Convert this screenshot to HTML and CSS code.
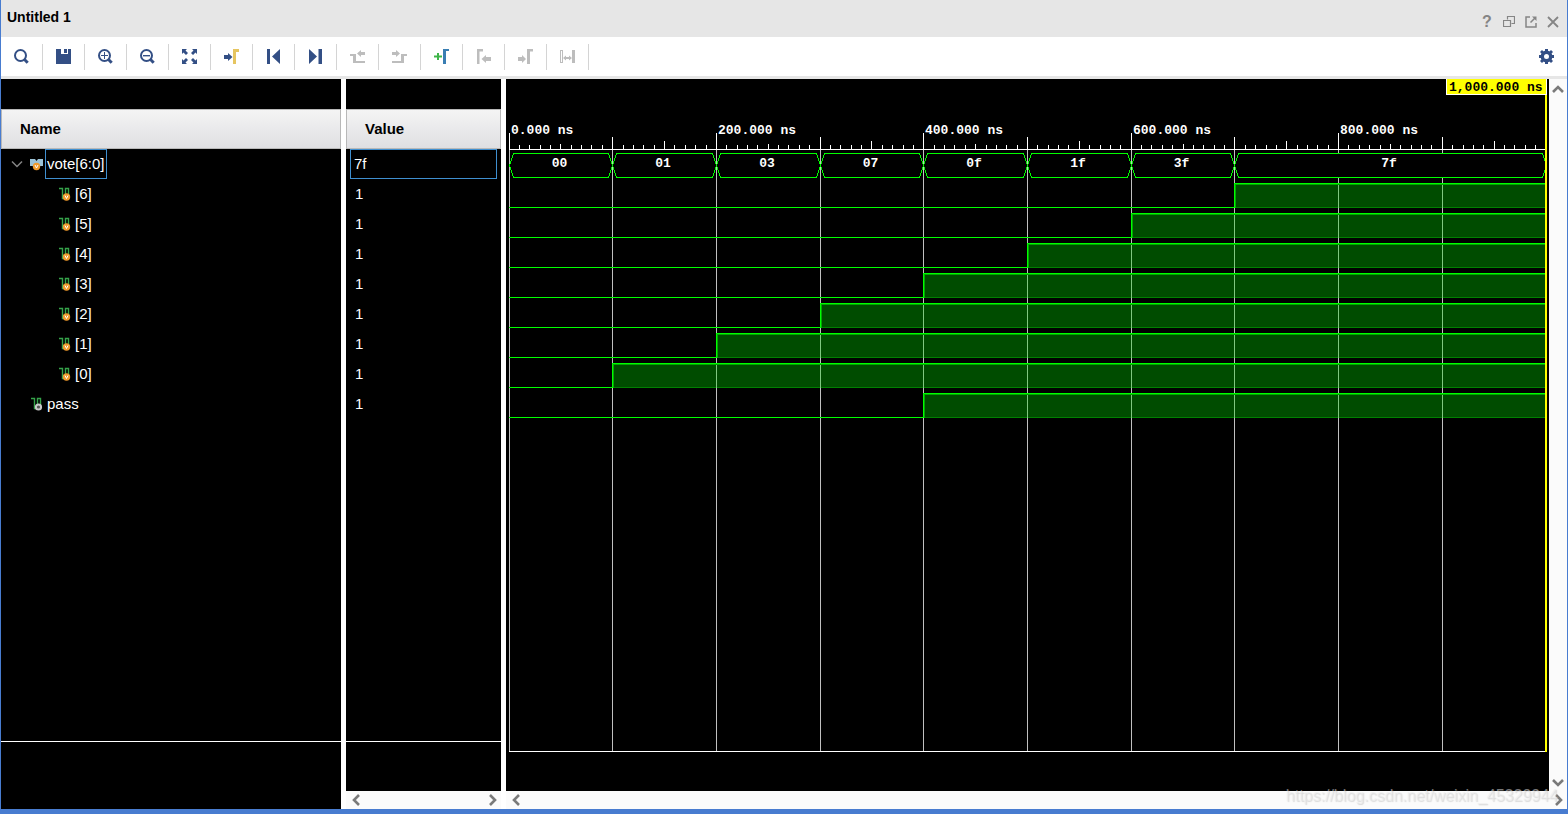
FILE: index.html
```html
<!DOCTYPE html>
<html lang="en">
<head>
<meta charset="utf-8">
<title>Untitled 1</title>
<link rel="stylesheet" href="styles.css">
</head>
<body>
<div class="window">
  <header class="titlebar">
    <h1 class="title">Untitled 1</h1>
    <div class="window-actions">
      <button class="window-button help" aria-label="Help">?</button>
      <button class="window-button" aria-label="Restore"><svg width="12" height="12" viewBox="0 0 12 12" fill="none" stroke="currentColor" stroke-width="1.200"><path d="M4.500 3.500v-3h7v7h-3M.5 4.500h7v6h-7z"/></svg></button>
      <button class="window-button" aria-label="Float"><svg width="12" height="12" viewBox="0 0 12 12" fill="none" stroke="currentColor" stroke-width="1.500"><path d="M5 1H1v10h10V7M5.500 6.500L10 2"/><path d="M7 .5h4.500V5z" fill="currentColor" stroke="none"/></svg></button>
      <button class="window-button" aria-label="Close"><svg width="12" height="12" viewBox="0 0 12 12" fill="none" stroke="currentColor" stroke-width="1.800"><path d="M1 1l10 10M11 1L1 11"/></svg></button>
    </div>
  </header>

  <nav class="toolbar" aria-label="Waveform tools">
    <button class="tool" aria-label="Search"><svg class="icon" viewBox="0 0 15 15"><circle cx="6.500" cy="6.500" r="5.500" class="line"/><path d="M10.500 10.500l3.200 3.200" class="thick"/></svg></button>
    <button class="tool" aria-label="Save"><svg class="icon" viewBox="0 0 15 15"><path d="M0 0h5v5h7V0h3v15H0zM8 0h3v4H8z"/></svg></button>
    <button class="tool" aria-label="Zoom in"><svg class="icon" viewBox="0 0 15 15"><circle cx="6.500" cy="6.500" r="5.500" class="line"/><path d="M10.500 10.500l3.200 3.200" class="thick"/><path d="M3 6h7v1H3zM6 3h1v7H6z"/></svg></button>
    <button class="tool" aria-label="Zoom out"><svg class="icon" viewBox="0 0 15 15"><circle cx="6.500" cy="6.500" r="5.500" class="line"/><path d="M10.500 10.500l3.200 3.200" class="thick"/><path d="M3 6h7v1.400H3z"/></svg></button>
    <button class="tool" aria-label="Zoom fit"><svg class="icon" viewBox="0 0 15 15"><path d="M0 0h5L3.500 1.500 6 4 4 6 1.500 3.500 0 5zM15 0v5l-1.500-1.500L11 6 9 4l2.500-2.500L10 0zM0 15v-5l1.500 1.500L4 9l2 2-2.500 2.500L5 15zM15 15h-5l1.500-1.500L9 11l2-2 2.500 2.500L15 10z"/></svg></button>
    <button class="tool" aria-label="Go to cursor"><svg class="icon" viewBox="0 0 15 15"><path d="M0 6h4V4l4.500 4L4 12v-2H0z"/><path class="yellow" d="M9 0h6v3h-3v12H9z"/></svg></button>
    <button class="tool" aria-label="Go to start"><svg class="icon" viewBox="0 0 15 15"><path d="M1 0h3v15H1zM14 0v15L6 7.500z"/></svg></button>
    <button class="tool" aria-label="Go to end"><svg class="icon" viewBox="0 0 15 15"><path d="M1 0v15l8-7.500zM10.500 0h3.500v15h-3.500z"/></svg></button>
    <button class="tool" aria-label="Previous transition" disabled><svg class="icon" viewBox="0 0 15 15"><path d="M0 5h6v7h9v2H3V7H0zM7 4.500L11 1v2h4v3h-4v2z"/></svg></button>
    <button class="tool" aria-label="Next transition" disabled><svg class="icon" viewBox="0 0 15 15"><path d="M15 5H9v7H0v2h12V7h3zM8 4.500L4 1v2H0v3h4v2z"/></svg></button>
    <button class="tool" aria-label="Add marker"><svg class="icon" viewBox="0 0 15 15"><path class="green" d="M3 4h2v2.500h3v2H5V11H3V8.500H0v-2h3z"/><path class="blue" d="M9 0h6v2h-3v13H9z"/></svg></button>
    <button class="tool" aria-label="Previous marker" disabled><svg class="icon" viewBox="0 0 15 15"><path d="M1 0h6v2.500H3.500V15H1zM5.500 10L10 6v2h5v4h-5v2z"/></svg></button>
    <button class="tool" aria-label="Next marker" disabled><svg class="icon" viewBox="0 0 15 15"><path d="M9 0h6v2.500h-3V15H9zM8 10L4 6v2H0v4h4v2z"/></svg></button>
    <button class="tool" aria-label="Swap cursors" disabled><svg class="icon" viewBox="0 0 15 15"><path fill-rule="evenodd" d="M0 1h3v13H0zM1 2v11h1V2zM12 1h3v13h-3zM3 9l3-2.500V8h3V6.500L12 9l-3 2.500V10H6v1.500z"/></svg></button>
    <button class="settings" aria-label="Settings"><svg class="icon" viewBox="0 0 15 15"><circle cx="7.500" cy="7.500" r="4.200" fill="none" stroke="currentColor" stroke-width="3.400"/><path d="M6 0h3v3H6zM6 12h3v3H6zM0 6h3v3H0zM12 6h3v3h-3zM1 3l2-2 2 2-2 2zM10 3l2-2 2 2-2 2zM1 12l2-2 2 2-2 2zM10 12l2-2 2 2-2 2z"/></svg></button>
  </nav>

  <main class="panels">
    <section class="panel names">
      <h2 class="heading">Name</h2>
      <ul class="rows" id="names"></ul>
      <div class="foot foot-tall"></div>
    </section>
    <section class="panel values">
      <h2 class="heading">Value</h2>
      <ul class="rows" id="values"></ul>
      <div class="foot"></div>
      <div class="scroll">
        <button class="arrow" aria-label="Scroll values left"><svg width="10" height="14" viewBox="0 0 10 14"><path d="M8 2L3 7l5 5"/></svg></button>
        <button class="arrow" aria-label="Scroll values right"><svg width="10" height="14" viewBox="0 0 10 14"><path d="M2 2l5 5-5 5"/></svg></button>
      </div>
    </section>
    <section class="waves">
      <div class="plot" id="plot"><div class="cursor-label">1,000.000 ns</div></div>
      <div class="scroll-vertical">
        <button class="arrow" aria-label="Scroll up"><svg width="14" height="10" viewBox="0 0 14 10"><path d="M2 8l5-5 5 5"/></svg></button>
        <button class="arrow" aria-label="Scroll down"><svg width="14" height="10" viewBox="0 0 14 10"><path d="M2 2l5 5 5-5"/></svg></button>
      </div>
      <div class="scroll scroll-wide">
        <button class="arrow" aria-label="Scroll waves left"><svg width="10" height="14" viewBox="0 0 10 14"><path d="M8 2L3 7l5 5"/></svg></button>
        <button class="arrow" aria-label="Scroll waves right"><svg width="10" height="14" viewBox="0 0 10 14"><path d="M2 2l5 5-5 5"/></svg></button>
      </div>
    </section>
  </main>
  <div class="watermark">https://blog.csdn.net/weixin_45329944</div>
</div>
<script src="script.js"></script>
</body>
</html>
```
FILE: styles.css
```css
* { box-sizing: border-box; }

body {
  margin: 0;
  font-family: "Liberation Sans", Arial, sans-serif;
  font-size: 15px;
  background: #fff;
}

button {
  padding: 0;
  border: 0;
  background: none;
  font: inherit;
}

svg { display: block; }

.window {
  position: relative;
  display: flex;
  flex-direction: column;
  height: 100vh;
  border: solid #487cd0;
  border-width: 0 1px 5px;
}

.titlebar {
  display: flex;
  justify-content: space-between;
  height: 37px;
  padding: 0 8px 0 6px;
  background: #e6e6e6;
}

.title {
  margin: 0;
  font-size: 14px;
  line-height: 34px;
}

.window-actions {
  display: flex;
  gap: 10px;
  padding-top: 6px;
  align-items: center;
  color: #858585;
}

.window-button {
  width: 12px;
  color: inherit;
}

.help {
  font-size: 16px;
  font-weight: bold;
}

.toolbar {
  display: flex;
  flex: none;
  align-items: center;
  height: 42px;
  background: #fff;
  border-bottom: 3px solid #e6e6e6;
}

.tool {
  display: flex;
  align-items: center;
  justify-content: center;
  width: 42px;
  height: 26px;
  border-right: 1px solid #d4d4d4;
  color: #334f85;
}

.tool:disabled { color: #bdbdbd; }

.settings {
  margin-left: auto;
  padding-right: 13px;
  color: #334f85;
}

.icon {
  width: 15px;
  height: 15px;
  fill: currentColor;
}

.line { fill: none; stroke: currentColor; stroke-width: 2; }
.thick { fill: none; stroke: currentColor; stroke-width: 3; }
.yellow { fill: #e6c560; }
.green { fill: #3fb549; }
.blue { fill: #397eb3; }

.panels {
  display: grid;
  grid-template-columns: 340px 155px 1fr;
  gap: 5px;
  flex: 1;
  min-height: 0;
}

.panel {
  display: flex;
  flex-direction: column;
  padding-top: 30px;
  background: #000;
  color: #fff;
}

.heading {
  height: 40px;
  margin: 0;
  padding-left: 18px;
  border: 1px solid #b8b8b8;
  background: linear-gradient(#f4f4f4, #dfdfe2);
  color: #000;
  font-size: 15px;
  line-height: 38px;
}

.rows {
  flex: 1;
  margin: 0;
  padding: 0;
  list-style: none;
}

.row {
  display: flex;
  align-items: center;
  height: 30px;
}

.names .row { padding-left: 30px; }
.names .bus { padding-left: 10px; }
.names .child { padding-left: 58px; }

.toggle {
  width: 12px;
  margin-right: 7px;
}

.name {
  height: 30px;
  padding: 0 1px;
  border: 1px solid transparent;
  line-height: 28px;
}

.bus .glyph { margin-right: 1px; }
.bus .name { border-color: #3f8fd0; }

.values .row {
  display: block;
  margin: 0 4px;
  padding: 0 4px;
  border: 1px solid transparent;
  line-height: 28px;
}

.values .row:first-child {
  padding-left: 3px;
  border-color: #3f8fd0;
}

.foot {
  height: 50px;
  border-top: 1px solid #fff;
}

.foot-tall { height: 68px; }

.scroll {
  display: flex;
  flex: none;
  justify-content: space-between;
  align-items: center;
  height: 18px;
  padding: 0 3px 0 5px;
  background: #fbfbfb;
}

.scroll-wide { grid-column: 1 / 3; }

.scroll-vertical {
  display: flex;
  flex-direction: column;
  justify-content: space-between;
  align-items: center;
  padding: 5px 0 3px;
  background: #fbfbfb;
}

.arrow path {
  fill: none;
  stroke: #7a7a7a;
  stroke-width: 2.6;
}

.waves {
  display: grid;
  grid-template-columns: 1fr 18px;
  grid-template-rows: 1fr 18px;
  min-width: 0;
  min-height: 0;
}

.plot {
  position: relative;
  min-width: 0;
  overflow: hidden;
  background: #000;
}

.plot svg {
  width: 100%;
  height: 100%;
  shape-rendering: crispEdges;
}

.plot text, .cursor-label {
  font-family: "Liberation Mono", monospace;
  font-size: 13px;
  font-weight: bold;
}

.plot text { fill: #fff; }

.cursor-label {
  position: absolute;
  top: 0;
  right: 2px;
  width: 101px;
  height: 16px;
  padding-left: 2px;
  border: solid #fff;
  border-width: 0 1px 1px;
  background: #ff0;
  line-height: 17px;
  color: #000;
}

.watermark {
  position: absolute;
  right: 9px;
  bottom: 0;
  color: rgba(235, 235, 235, 0.5);
  font-size: 16px;
  line-height: 26px;
  text-shadow: 1px 1px 1px rgba(140, 140, 140, 0.3);
  pointer-events: none;
}
```
FILE: script.js
```js
const signals = [
  { name: 'vote[6:0]', value: '7f', kind: 'bus' },
  { name: '[6]', value: '1', kind: 'child', rise: 700 },
  { name: '[5]', value: '1', kind: 'child', rise: 600 },
  { name: '[4]', value: '1', kind: 'child', rise: 500 },
  { name: '[3]', value: '1', kind: 'child', rise: 400 },
  { name: '[2]', value: '1', kind: 'child', rise: 300 },
  { name: '[1]', value: '1', kind: 'child', rise: 200 },
  { name: '[0]', value: '1', kind: 'child', rise: 100 },
  { name: 'pass', value: '1', kind: 'output', rise: 400 }
];
const busValues = ['00', '01', '03', '07', '0f', '1f', '3f', '7f'];

const badge = (x, y, inner) => inner
  ? `<circle cx="${x}" cy="${y}" r="3.700" fill="#f09a2c"/><path d="M${x - 1.5} ${y - 1.5}L${x} ${y + 1.5}L${x + 1.5} ${y - 1.5}" fill="none" stroke="#fff"/>`
  : `<circle cx="${x}" cy="${y}" r="2.600" fill="#555" stroke="#c8c8c8" stroke-width="2"/>`;

function glyph(kind) {
  const art = kind === 'bus'
    ? '<path d="M0 2h5l1.500 2L8 2h5v7H8L6.500 7 5 9H0z" fill="#9cc3d8"/>' + badge(6.5, 9.5, true)
    : '<path d="M0 1.500h3.500v10H6M6.500 10V1.500h3V8" fill="none" stroke="#35a34a" stroke-width="1.400"/>' + badge(7.5, 10, kind === 'child');
  return `<svg class="glyph" width="14" height="14" viewBox="0 0 14 14">${art}</svg>`;
}

const toggle = '<button class="toggle" aria-label="Collapse vote"><svg width="12" height="8" viewBox="0 0 12 8"><path d="M1 1.500l5 5 5-5" fill="none" stroke="#858585" stroke-width="1.500"/></svg></button>';

document.getElementById('names').innerHTML = signals.map(s =>
  `<li class="row ${s.kind}">${s.kind === 'bus' ? toggle : ''}${glyph(s.kind)}<span class="name">${s.name}</span></li>`).join('');
document.getElementById('values').innerHTML = signals.map(s => `<li class="row">${s.value}</li>`).join('');

const plot = document.getElementById('plot');
const svg = document.createElementNS('http://www.w3.org/2000/svg', 'svg');
plot.prepend(svg);

function draw() {
  const width = plot.clientWidth;
  const bottom = plot.clientHeight - 40;
  const X = t => 3 + Math.floor(t * (width - 6) / 1000);
  const end = X(1000);
  const out = [];
  const rect = (x, y, w, h, fill) => out.push(`<rect x="${x}" y="${y}" width="${w}" height="${h}" fill="${fill}"/>`);
  const text = (x, y, s, anchor) => out.push(`<text x="${x}" y="${y}" text-anchor="${anchor}">${s}</text>`);

  // Grid
  for (let t = 0; t < 1000; t += 100) rect(X(t), 71, 1, bottom - 71, '#c0c0c0');
  rect(3, bottom, end - 3, 1, '#fff');

  // Time ruler
  rect(3, 70, end - 3, 1, '#fff');
  for (let t = 0; t < 1000; t += 10) {
    let top = 66;
    if (t % 200 === 0) top = 54;
    else if (t % 100 === 0) top = 58;
    else if (t % 200 === 150) top = 62;
    else if (t % 50 === 0) top = 65;
    rect(X(t), top, 1, 70 - top, '#fff');
    if (t % 200 === 0) text(X(t) + 2, 55, t + '.000 ns', 'start');
  }

  // Bus row
  busValues.forEach((value, i) => {
    const a = X(i * 100);
    const b = i === 7 ? end : X(i * 100 + 100);
    out.push(`<path d="M${a + .5} 86.500L${a + 4.5} 74.500H${b - 3.5}L${b + .5} 86.500L${b - 3.5} 98.500H${a + 4.5}Z" fill="#000" stroke="#0f0"/>`);
    text((a + b) / 2 - 1, 88, value, 'middle');
  });

  // Single-bit rows
  signals.slice(1).forEach((s, i) => {
    const top = 104 + i * 30;
    const x = X(s.rise);
    rect(3, top + 24, x - 3, 1, '#0f0');
    rect(x, top, end - x, 25, '#004c00');
    rect(x, top + 24, end - x, 1, '#008000');
    rect(x, top + 1, end - x, 1, '#00a800');
    rect(x + 1, top + 1, 1, 24, '#00a800');
    for (let t = s.rise + 100; t < 1000; t += 100) rect(X(t), top + 2, 1, 23, '#80c880');
    rect(x, top, end - x, 1, '#0f0');
    rect(x, top, 1, 25, '#0f0');
  });

  rect(end - 1, 16, 2, bottom - 15, '#ff0');
  svg.innerHTML = out.join('');
}

draw();
new ResizeObserver(draw).observe(plot);
```
